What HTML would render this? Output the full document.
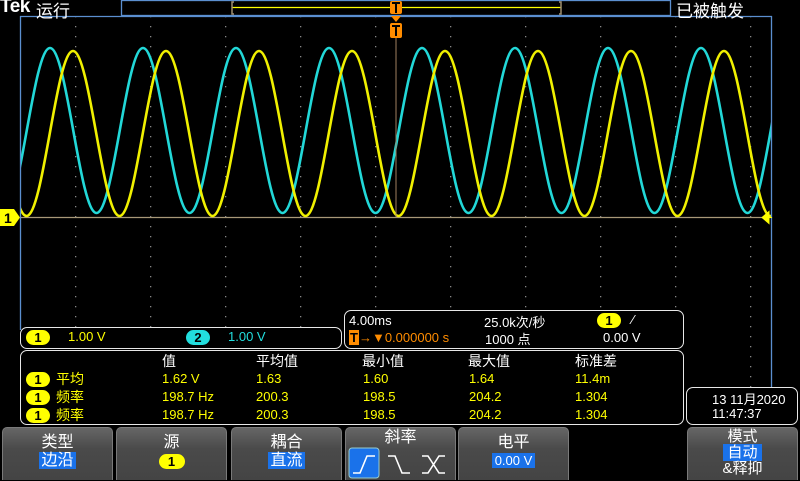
<!DOCTYPE html>
<html><head><meta charset="utf-8"><style>
*{margin:0;padding:0;box-sizing:border-box}
body{width:800px;height:480px;background:#000;position:relative;overflow:hidden;font-family:"Liberation Sans","Noto Sans CJK SC",sans-serif;color:#fff}
.a{position:absolute;white-space:nowrap}
.y{color:#ffff00}.c{color:#22dede}.o{color:#ff8c00}
.box{position:absolute;border:1.5px solid #e8e8e8;border-radius:7px;background:#000}
.pill{position:absolute;width:24px;height:15px;border-radius:8px;background:#ffff00;color:#000;font-weight:bold;font-size:13px;text-align:center;line-height:15px}
.btn{position:absolute;top:427px;height:53px;width:111px;border-radius:5px 5px 0 0;background:linear-gradient(#666,#4a4a4a 40%,#444);border:1px solid #7a7a7a;border-bottom:none;text-align:center;font-size:16px;color:#fff}
.hl{background:#1a72ea;color:#fff;padding:0 2px}
.t13{font-size:13px}
</style></head><body>
<svg class="a" style="left:0;top:0" width="800" height="480">
<defs>
<pattern id="vd" x="0" y="16" width="75" height="10" patternUnits="userSpaceOnUse"><rect x="0" y="0" width="1.3" height="1.3" fill="#888"/></pattern>
<pattern id="hd" x="20" y="0" width="15" height="50" patternUnits="userSpaceOnUse"><rect x="0" y="0" width="1.3" height="1.3" fill="#888"/></pattern>
<clipPath id="cl"><rect x="21" y="17" width="750" height="300"/></clipPath>
</defs>
<rect x="20" y="16" width="751" height="400" fill="url(#vd)"/>
<g fill="#888">
<rect x="20" y="167" width="751" height="1.3" fill="url(#hd)"/>
<rect x="20" y="267" width="751" height="1.3" fill="url(#hd)"/>
<rect x="20" y="117" width="751" height="1.3" fill="url(#hd)"/>
<rect x="20" y="67" width="751" height="1.3" fill="url(#hd)"/>
<rect x="20" y="19" width="751" height="1.3" fill="url(#hd)"/>
</g>
<line x1="20" y1="217.5" x2="771" y2="217.5" stroke="#a89878" stroke-width="1.3"/>
<g clip-path="url(#cl)" fill="none" stroke-width="2.6" stroke-linejoin="round">
<path stroke="#22d8d8" d="M-43,48 c16.9,0 29.6,165 46.5,165 s29.6,-165 46.5,-165 s29.6,165 46.5,165 s29.6,-165 46.5,-165 s29.6,165 46.5,165 s29.6,-165 46.5,-165 s29.6,165 46.5,165 s29.6,-165 46.5,-165 s29.6,165 46.5,165 s29.6,-165 46.5,-165 s29.6,165 46.5,165 s29.6,-165 46.5,-165 s29.6,165 46.5,165 s29.6,-165 46.5,-165 s29.6,165 46.5,165 s29.6,-165 46.5,-165 s29.6,165 46.5,165 s29.6,-165 46.5,-165 s29.6,165 46.5,165 s29.6,-165 46.5,-165 s29.6,165 46.5,165"/>
<path stroke="#f0f000" d="M-20,51 c16.9,0 29.6,165 46.5,165 s29.6,-165 46.5,-165 s29.6,165 46.5,165 s29.6,-165 46.5,-165 s29.6,165 46.5,165 s29.6,-165 46.5,-165 s29.6,165 46.5,165 s29.6,-165 46.5,-165 s29.6,165 46.5,165 s29.6,-165 46.5,-165 s29.6,165 46.5,165 s29.6,-165 46.5,-165 s29.6,165 46.5,165 s29.6,-165 46.5,-165 s29.6,165 46.5,165 s29.6,-165 46.5,-165 s29.6,165 46.5,165 s29.6,-165 46.5,-165 s29.6,165 46.5,165 s29.6,-165 46.5,-165 s29.6,165 46.5,165"/>
</g>
<line x1="20.5" y1="16" x2="20.5" y2="330" stroke="#5b8fd0" stroke-width="1.3"/>
<line x1="771.5" y1="16" x2="771.5" y2="390" stroke="#5b8fd0" stroke-width="1.3"/>
<line x1="20" y1="16.5" x2="772" y2="16.5" stroke="#5b8fd0" stroke-width="1.3"/>
<rect x="121.5" y="0.5" width="549" height="15" fill="none" stroke="#5b8fd0" stroke-width="1.3"/>
<line x1="232" y1="7.5" x2="561" y2="7.5" stroke="#ffff00" stroke-width="1.3"/>
<path d="M234,2 h-2 v12 h2 M559,2 h2 v12 h-2" stroke="#a09070" fill="none" stroke-width="1.5"/>
<line x1="396" y1="38" x2="396" y2="217" stroke="#a08060" stroke-width="1"/>
<rect x="390" y="1" width="12" height="13" rx="2" fill="#ff8c00"/>
<path d="M392,3 h8 M396,3 v10" stroke="#000" stroke-width="2"/>
<path d="M391,16 l5,6 l5,-6 z" fill="#ff8c00"/>
<rect x="390" y="23" width="12" height="15" rx="2" fill="#ff8c00"/>
<path d="M392,26 h8 M396,26 v10" stroke="#000" stroke-width="2"/>
<path d="M0,209 h14 l6,8.5 l-6,8.5 h-14 z" fill="#ffff00"/>
<text x="4" y="223" font-family="Liberation Sans" font-weight="bold" font-size="14" fill="#000">1</text>
<path d="M762,217.5 l7,-6 v12 z M768,217.5 h4" fill="#ffff00" stroke="#ffff00" stroke-width="1"/>
</svg>
<div class="a" style="left:0;top:-4px;font-size:19px;font-weight:bold;letter-spacing:-0.5px">Tek</div>
<div class="a" style="left:36px;top:-3px;font-size:17px">运行</div>
<div class="a" style="left:676px;top:-3px;font-size:17px">已被触发</div>

<div class="box" style="left:20px;top:327px;width:322px;height:22px"></div>
<div class="pill" style="left:26px;top:330px">1</div>
<div class="a y t13" style="left:68px;top:329px">1.00 V</div>
<div class="pill" style="left:186px;top:330px;background:#22dede">2</div>
<div class="a c t13" style="left:228px;top:329px">1.00 V</div>

<div class="box" style="left:344px;top:310px;width:340px;height:39px"></div>
<div class="a t13" style="left:349px;top:313px">4.00ms</div>
<div class="a o t13" style="left:349px;top:330px"><span style="background:#ff8c00;color:#000;font-weight:bold;padding:0 1px">T</span>→▼0.000000 s</div>
<div class="a t13" style="left:484px;top:312px">25.0k次/秒</div>
<div class="a t13" style="left:485px;top:329px">1000 点</div>
<div class="pill" style="left:597px;top:313px">1</div>
<div class="a t13" style="left:632px;top:312px">∕</div>
<div class="a t13" style="left:603px;top:330px">0.00 V</div>

<div class="box" style="left:20px;top:350px;width:664px;height:75px"></div>
<div class="a" style="left:162px;top:351px;font-size:14px">值</div>
<div class="a" style="left:256px;top:351px;font-size:14px">平均值</div>
<div class="a" style="left:362px;top:351px;font-size:14px">最小值</div>
<div class="a" style="left:468px;top:351px;font-size:14px">最大值</div>
<div class="a" style="left:575px;top:351px;font-size:14px">标准差</div>

<div class="pill" style="left:26px;top:372px">1</div>
<div class="pill" style="left:26px;top:390px">1</div>
<div class="pill" style="left:26px;top:408px">1</div>
<div class="a y" style="left:56px;top:369px;font-size:14px">平均</div>
<div class="a y" style="left:56px;top:387px;font-size:14px">频率</div>
<div class="a y" style="left:56px;top:405px;font-size:14px">频率</div>
<div class="a y t13" style="left:162px;top:371px">1.62 V</div>
<div class="a y t13" style="left:162px;top:389px">198.7 Hz</div>
<div class="a y t13" style="left:162px;top:407px">198.7 Hz</div>
<div class="a y t13" style="left:256px;top:371px">1.63</div>
<div class="a y t13" style="left:256px;top:389px">200.3</div>
<div class="a y t13" style="left:256px;top:407px">200.3</div>
<div class="a y t13" style="left:363px;top:371px">1.60</div>
<div class="a y t13" style="left:363px;top:389px">198.5</div>
<div class="a y t13" style="left:363px;top:407px">198.5</div>
<div class="a y t13" style="left:469px;top:371px">1.64</div>
<div class="a y t13" style="left:469px;top:389px">204.2</div>
<div class="a y t13" style="left:469px;top:407px">204.2</div>
<div class="a y t13" style="left:575px;top:371px">11.4m</div>
<div class="a y t13" style="left:575px;top:389px">1.304</div>
<div class="a y t13" style="left:575px;top:407px">1.304</div>

<div class="box" style="left:686px;top:387px;width:112px;height:38px"></div>
<div class="a t13" style="left:712px;top:389px">13 11月2020</div>
<div class="a t13" style="left:712px;top:406px">11:47:37</div>

<div class="btn" style="left:2px"><div style="margin-top:6px;line-height:17px">类型</div><div style="line-height:17px;margin-top:1px"><span class="hl">边沿</span></div></div>
<div class="btn" style="left:116px"><div style="margin-top:6px;line-height:17px">源</div><div class="pill" style="position:relative;margin:3px auto 0;width:26px;top:0">1</div></div>
<div class="btn" style="left:231px"><div style="margin-top:6px;line-height:17px">耦合</div><div style="line-height:17px;margin-top:1px"><span class="hl">直流</span></div></div>
<div class="btn" style="left:345px"><div style="margin-top:1px;line-height:17px">斜率</div>
<svg class="a" style="left:0;top:18px" width="111" height="35"><rect x="3" y="2" width="30" height="30" rx="3" fill="#1a72ea" stroke="#9cc" stroke-width="1"/><path d="M7,27 h7 l7,-17 h8" stroke="#fff" stroke-width="1.6" fill="none"/><path d="M42,10 h7 l7,17 h8" stroke="#fff" stroke-width="1.6" fill="none"/><path d="M76,10 h6 l11,17 h6 M76,27 h6 l11,-17 h6" stroke="#fff" stroke-width="1.6" fill="none"/></svg></div>
<div class="btn" style="left:458px"><div style="margin-top:6px;line-height:17px">电平</div><div style="line-height:17px;font-size:13px;margin-top:1px"><span class="hl" style="padding:0 3px">0.00 V</span></div></div>
<div class="btn" style="left:687px;font-size:15px"><div style="margin-top:1px;line-height:16px">模式</div><div style="line-height:16px"><span class="hl" style="padding:0 4px">自动</span></div><div style="line-height:16px">&amp;释抑</div></div>
</body></html>
